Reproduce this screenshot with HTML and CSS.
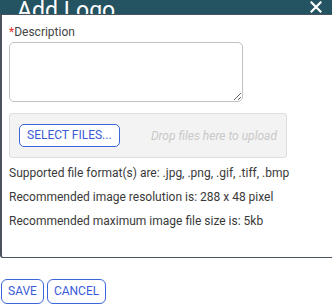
FILE: index.html
```html
<!DOCTYPE html>
<html>
<head>
<meta charset="utf-8">
<link rel="stylesheet" href="styles.css">
</head>
<body>
<div class="page">
  <div class="header">
    <span class="title">Add Logo</span>
    <svg class="close" width="12" height="12" viewBox="0 0 12 12"><path d="M1.5 1.5 L10.5 10.5 M10.5 1.5 L1.5 10.5" stroke="#fff" stroke-width="2.2" stroke-linecap="square"/></svg>
  </div>
  <div class="panel">
    <label class="label"><span class="req">*</span>Description</label>
    <div class="ta-wrap"><textarea class="ta"></textarea></div>
    <div class="drop">
      <button class="btn">SELECT FILES...</button>
      <span class="hint">Drop files here to upload</span>
    </div>
    <p class="info">Supported file format(s) are: .jpg, .png, .gif, .tiff, .bmp</p>
    <p class="info">Recommended image resolution is: 288 x 48 pixel</p>
    <p class="info">Recommended maximum image file size is: 5kb</p>
  </div>
  <div class="actions">
    <button class="btn act">SAVE</button>
    <button class="btn act">CANCEL</button>
  </div>
</div>
</body>
</html>
```
FILE: styles.css
```css
html, body { margin: 0; padding: 0; background: #fff; overflow: hidden; }
body { width: 332px; height: 305px; font-family: Roboto, "Liberation Sans", sans-serif; }
.page { width: 332px; }
.header {
  height: 14px; background: #245361; overflow: hidden;
  display: flex; justify-content: space-between; align-items: flex-start;
  padding: 0 10px 0 17px;
}
.title { color: #fff; font-size: 23px; line-height: 23px; margin-top: -1px; }
.close { margin-top: 1px; }
.panel {
  width: 340px; box-sizing: border-box;
  border: 1px solid #4a5260; border-left-width: 2px;
  border-radius: 0 0 0 3px;
  padding: 10px 0 16px 7px;
  height: 244px;
}
.label { display: block; font-size: 12px; color: #444; line-height: 14px; }
.req { color: #e03030; }
.ta-wrap { margin-top: 3px; height: 60px; }
.ta {
  width: 234px; height: 60px; box-sizing: border-box; resize: both;
  border: 1px solid #c2c2c2; border-radius: 5px; margin: 0; display: block;
  font-family: inherit;
}
.drop {
  margin-top: 11px; width: 278px; height: 45px; box-sizing: border-box;
  background: #f3f3f3; border: 1px solid #dedede; border-radius: 3px;
  display: flex; align-items: center; justify-content: space-between;
  padding: 0 9px 0 9px;
}
.btn {
  font-family: Roboto, "Liberation Sans", sans-serif; font-size: 12px;
  color: #3b5bd6; background: #fff; border: 1px solid #3b66d9;
  border-radius: 5px; padding: 0 7px; height: 23px; line-height: 21px;
  margin: 0;
}
.hint { font-size: 12px; font-style: italic; color: #c9c9c9; }
.info { margin: 0; font-size: 12px; color: #3a3a3a; line-height: 14px; }
.drop + .info { margin-top: 8px; }
.info + .info { margin-top: 10px; }
.actions { display: flex; gap: 3px; padding: 21px 0 0 1px; }
.act { height: 25px; padding: 0 6px; border-radius: 6px; }
```
